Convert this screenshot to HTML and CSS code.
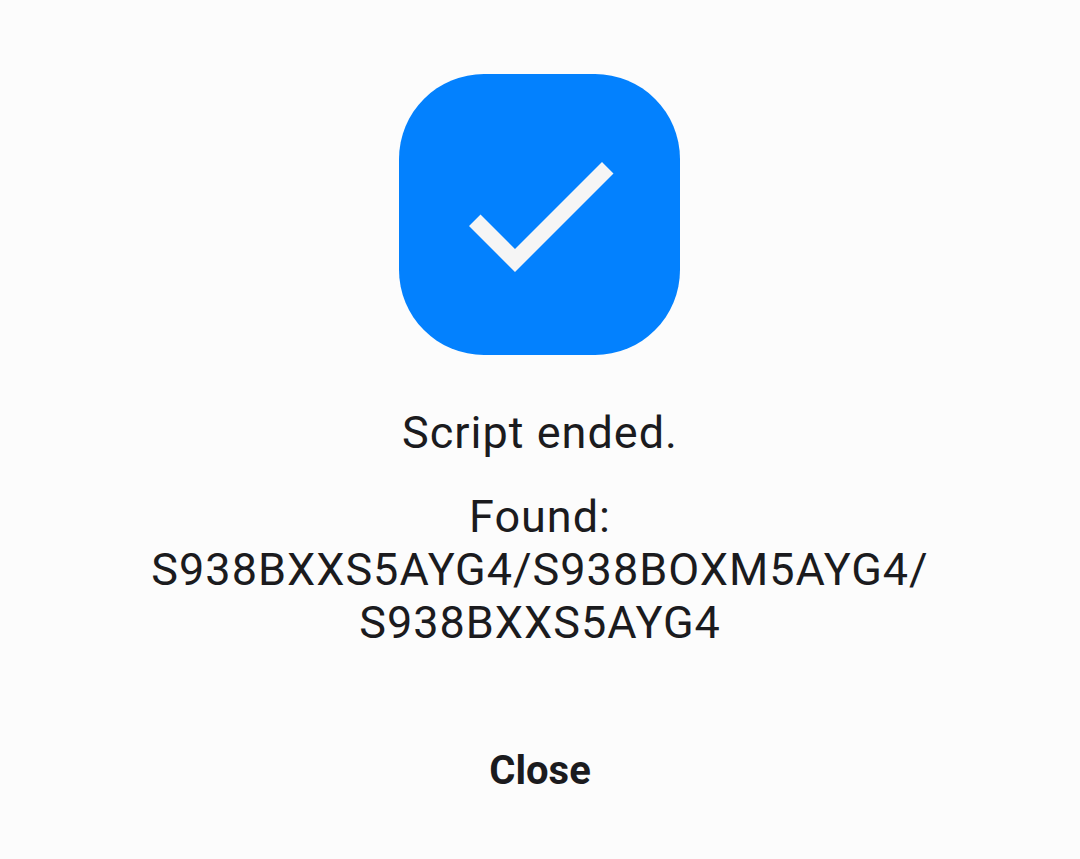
FILE: index.html
```html
<!DOCTYPE html>
<html lang="en">
<head>
<meta charset="utf-8">
<meta name="viewport" content="width=device-width, initial-scale=1">
<title>Script ended</title>
<link rel="stylesheet" href="styles.css">
</head>
<body>
<main class="dialog">
  <svg class="badge" viewBox="0 0 282 282" aria-hidden="true">
    <rect class="badge-tile" width="281" height="281" rx="85"/>
    <path class="badge-check" d="M70 152 81.500 140.500 116 175 203 88 214.500 99.500 116 198Z"/>
  </svg>
  <p class="status">Script ended.</p>
  <p class="result">Found:<br>S938BXXS5AYG4/S938BOXM5AYG4/<wbr>S938BXXS5AYG4</p>
  <button class="close" type="button">Close</button>
</main>
</body>
</html>
```

FILE: styles.css
```css
body {
  margin: 0;
  background: #fcfcfc;
  color: #1b1b1e;
  font-family: Roboto, sans-serif;
}

.dialog {
  display: flex;
  flex-direction: column;
  align-items: center;
  padding: 74px 112px 48px;
  text-align: center;
}

.badge {
  width: 282px;
  height: 282px;
}

.badge-tile {
  fill: #0381fe;
}

.badge-check {
  fill: #f5f5f5;
}

.status,
.result {
  margin: 0;
  font-size: 45px;
  line-height: 53px;
  letter-spacing: 1px;
}

.status {
  margin-top: 50px;
}

.result {
  margin-top: 31px;
}

.close {
  margin-top: 82px;
  padding: 8px 32px;
  border: 0;
  background: transparent;
  color: inherit;
  font-family: inherit;
  font-size: 40px;
  font-weight: 700;
  line-height: 64px;
}
```
